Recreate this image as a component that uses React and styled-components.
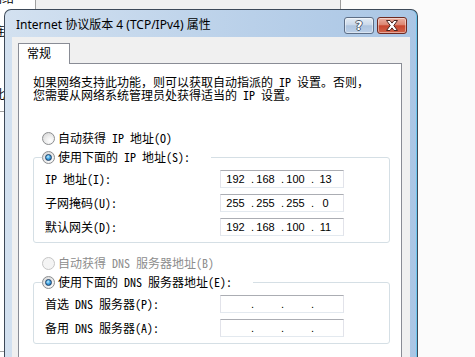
import React from "react";
import styled, { createGlobalStyle } from "styled-components";

const SONG = `"Noto Sans Mono CJK SC", "Noto Sans CJK SC", monospace`;
const UI = `"Noto Sans", "Noto Sans CJK SC", sans-serif`;

const GlobalStyle = createGlobalStyle`
    *, *::before, *::after { box-sizing: border-box; }
    html, body { margin: 0; padding: 0; }
    body {
        width: 475px;
        height: 357px;
        overflow: hidden;
        background: #fbfbfb;
    }
`;

const Desktop = styled.div`
    position: relative;
    width: 475px;
    height: 357px;
    overflow: hidden;
    background: #fbfbfb;
`;

// window behind the dialog
const BackWindow = styled.div`
    position: absolute;
    left: 0;
    top: 0;
    width: 341px;
    height: 357px;
    display: flex;
    border-right: 1px solid #9c9c9c;
`;

const Sidebar = styled.div`
    width: 36px;
    background: #fff;
    border-right: 1px solid #a0a0a0;
    font-family: ${SONG};
    font-size: 12px;
    color: #000;
    overflow: hidden;
`;

const SideItem = styled.div`
    height: ${p => p.$h}px;
    line-height: 12px;
    white-space: nowrap;
    text-indent: ${p => p.$indent || 0}px;
    padding-top: ${p => p.$pad || 0}px;
    border-bottom: ${p => (p.$line ? "1px solid #a0a0a0" : "none")};
    &:first-child {
        margin-top: -8px;
    }
`;

const BackMain = styled.div`
    flex: 1;
    background: #f0f0f0;
`;

const Dialog = styled.div`
    position: absolute;
    left: 4px;
    top: 9px;
    width: 414px;
    height: 360px;
    display: flex;
    flex-direction: column;
    padding: 0 7px;
    border: 1px solid #3d4958;
    border-bottom: none;
    border-radius: 7px 7px 0 0;
    background: linear-gradient(to right, #d3e1f0, #b9d0e9 60%, #aac6e5);
    box-shadow: inset -1px 0 0 #6cc6ee;
`;

const TitleBar = styled.div`
    height: 27px;
    display: flex;
    align-items: flex-start;
    padding: 0 3px 0 4px;
`;

const Title = styled.div`
    flex: 1;
    padding-top: 7px;
    line-height: 16px;
    font-family: ${UI};
    font-size: 12px;
    color: #000;
    white-space: nowrap;
`;

const CaptionButtons = styled.div`
    display: flex;
    gap: 3px;
    margin-top: 7px;
`;

const CaptionButton = styled.div`
    width: 30px;
    height: 17px;
    border-radius: 3px;
    display: flex;
    align-items: center;
    justify-content: center;
    border: 1px solid ${p => (p.$close ? "#6e2a22" : "#5d6e86")};
    background: ${p =>
        p.$close
            ? "linear-gradient(#eab0a3 0%, #dc8672 45%, #c8462f 52%, #d0634a 100%)"
            : "linear-gradient(#e4ecf5 0%, #cbd9ea 45%, #aec4df 52%, #bcd0e8 100%)"};
    box-shadow: inset 0 0 0 1px rgba(255, 255, 255, 0.45);
`;

const HelpMark = styled.span`
    font-family: "DejaVu Sans", sans-serif;
    font-weight: bold;
    font-size: 12px;
    line-height: 12px;
    color: #fff;
    text-shadow: -1px 0 #4d5a6b, 1px 0 #4d5a6b, 0 -1px #4d5a6b, 0 1px #4d5a6b;
`;

const Client = styled.div`
    flex: 1;
    display: flex;
    flex-direction: column;
    background: #f0f0f0;
    padding: 6px 8px 0 6px;
`;

const Tab = styled.div`
    position: relative;
    z-index: 1;
    width: 52px;
    height: 21px;
    margin-bottom: -1px;
    padding-left: 8px;
    background: #fff;
    border: 1px solid #898c95;
    border-bottom: none;
    font-family: ${UI};
    font-size: 12px;
    line-height: 19px;
    color: #000;
`;

const Pane = styled.div`
    flex: 1;
    background: #fff;
    border: 1px solid #898c95;
    border-bottom: none;
    padding: 11px 0 0 14px;
    font-family: ${SONG};
    font-size: 12px;
    color: #000;
`;

const Intro = styled.p`
    margin: 0;
    line-height: 13px;
    white-space: nowrap;
`;

const RadioRow = styled.div`
    display: flex;
    align-items: center;
    gap: 3px;
    height: 16px;
    margin: ${p => p.$top}px 0 0 9px;
    white-space: nowrap;
`;

const RadioDot = styled.span`
    position: relative;
    flex: none;
    width: 13px;
    height: 13px;
    border-radius: 50%;
    border: 1px solid ${p => (p.$disabled ? "#c5c5c5" : "#8b8d8f")};
    background: ${p =>
        p.$disabled
            ? "#f4f4f4"
            : "radial-gradient(circle at 65% 70%, #ffffff 0, #f1f1f1 35%, #d2d2d2 100%)"};
    &::after {
        content: "";
        display: ${p => (p.$checked ? "block" : "none")};
        position: absolute;
        inset: 2px;
        border-radius: 50%;
        border: 1px solid #1c3f66;
        background: radial-gradient(circle at 40% 35%, #c8efff 0, #4eaee8 40%, #0f5aa3 100%);
    }
`;

const Label = styled.span`
    line-height: 16px;
    color: ${p => (p.$disabled ? "#8d8d8d" : "#000")};
`;

const Group = styled.fieldset`
    width: 357px;
    min-width: 0;
    margin: 3px 0 0 0;
    padding: 5px 0 6px 8px;
    border: 1px solid #d5dfe5;
    border-radius: 3px;
`;

const Legend = styled.legend`
    display: flex;
    align-items: center;
    gap: 3px;
    height: 16px;
    padding: 0 21px 0 0;
    white-space: nowrap;
`;

const Fields = styled.div`
    display: grid;
    grid-template-columns: 175px 124px;
    row-gap: 6px;
    align-items: center;
    margin-left: 3px;
`;

const FieldLabel = styled.span`
    line-height: 16px;
    white-space: nowrap;
`;

const IpBox = styled.div`
    width: 124px;
    height: 18px;
    display: flex;
    padding-left: 2px;
    background: #fff;
    border: 1px solid;
    border-color: #abadb3 #e2e3ea #e3e9ef #e2e3ea;
    font-family: "Liberation Sans", Arial, sans-serif;
    font-size: 11px;
    line-height: 16px;
    color: #000;
`;

const Octet = styled.span`
    width: 25px;
    text-align: center;
`;

const Sep = styled.span`
    width: 6px;
    text-align: right;
    margin-right: -1px;
    padding-right: 0;
`;

function IpField({ value }) {
    const parts = value ? value.split(".") : ["", "", "", ""];
    return (
        <IpBox>
            {parts.map((p, i) => (
                <React.Fragment key={i}>
                    {i > 0 && <Sep>.</Sep>}
                    <Octet>{p}</Octet>
                </React.Fragment>
            ))}
        </IpBox>
    );
}

function Radio({ checked, disabled, children }) {
    return (
        <>
            <RadioDot $checked={checked} $disabled={disabled} />
            <Label $disabled={disabled}>{children}</Label>
        </>
    );
}

function CloseGlyph() {
    return (
        <svg width="14" height="11" viewBox="0 0 14 11">
            <path
                d="M1.5 0.5h3.5l2 2.6 2-2.6h3.5l-3.7 5 3.7 5h-3.5l-2-2.6-2 2.6h-3.5l3.7-5z"
                fill="#fff"
                stroke="#4a2520"
                strokeWidth="1"
                strokeLinejoin="round"
            />
        </svg>
    );
}

export default function App() {
    return (
        <Desktop>
            <GlobalStyle />
            <BackWindow>
                <Sidebar>
                    <SideItem $h={33} $indent={-10}>网络</SideItem>
                    <SideItem $h={63} $indent={-7}>连</SideItem>
                    <SideItem $h={24} $indent={-7} $line>此</SideItem>
                    <SideItem $h={240} $line />
                </Sidebar>
                <BackMain />
            </BackWindow>

            <Dialog>
                <TitleBar>
                    <Title>Internet 协议版本 4 (TCP/IPv4) 属性</Title>
                    <CaptionButtons>
                        <CaptionButton>
                            <HelpMark>?</HelpMark>
                        </CaptionButton>
                        <CaptionButton $close>
                            <CloseGlyph />
                        </CaptionButton>
                    </CaptionButtons>
                </TitleBar>
                <Client>
                    <Tab>常规</Tab>
                    <Pane>
                        <Intro>
                            如果网络支持此功能，则可以获取自动指派的 IP 设置。否则，
                            <br />
                            您需要从网络系统管理员处获得适当的 IP 设置。
                        </Intro>

                        <RadioRow $top={29}>
                            <Radio>自动获得 IP 地址(O)</Radio>
                        </RadioRow>
                        <Group>
                            <Legend>
                                <Radio checked>使用下面的 IP 地址(S):</Radio>
                            </Legend>
                            <Fields>
                                <FieldLabel>IP 地址(I):</FieldLabel>
                                <IpField value="192.168.100.13" />
                                <FieldLabel>子网掩码(U):</FieldLabel>
                                <IpField value="255.255.255.0" />
                                <FieldLabel>默认网关(D):</FieldLabel>
                                <IpField value="192.168.100.11" />
                            </Fields>
                        </Group>

                        <RadioRow $top={12}>
                            <Radio disabled>自动获得 DNS 服务器地址(B)</Radio>
                        </RadioRow>
                        <Group>
                            <Legend>
                                <Radio checked>使用下面的 DNS 服务器地址(E):</Radio>
                            </Legend>
                            <Fields>
                                <FieldLabel>首选 DNS 服务器(P):</FieldLabel>
                                <IpField />
                                <FieldLabel>备用 DNS 服务器(A):</FieldLabel>
                                <IpField />
                            </Fields>
                        </Group>
                    </Pane>
                </Client>
            </Dialog>
        </Desktop>
    );
}
